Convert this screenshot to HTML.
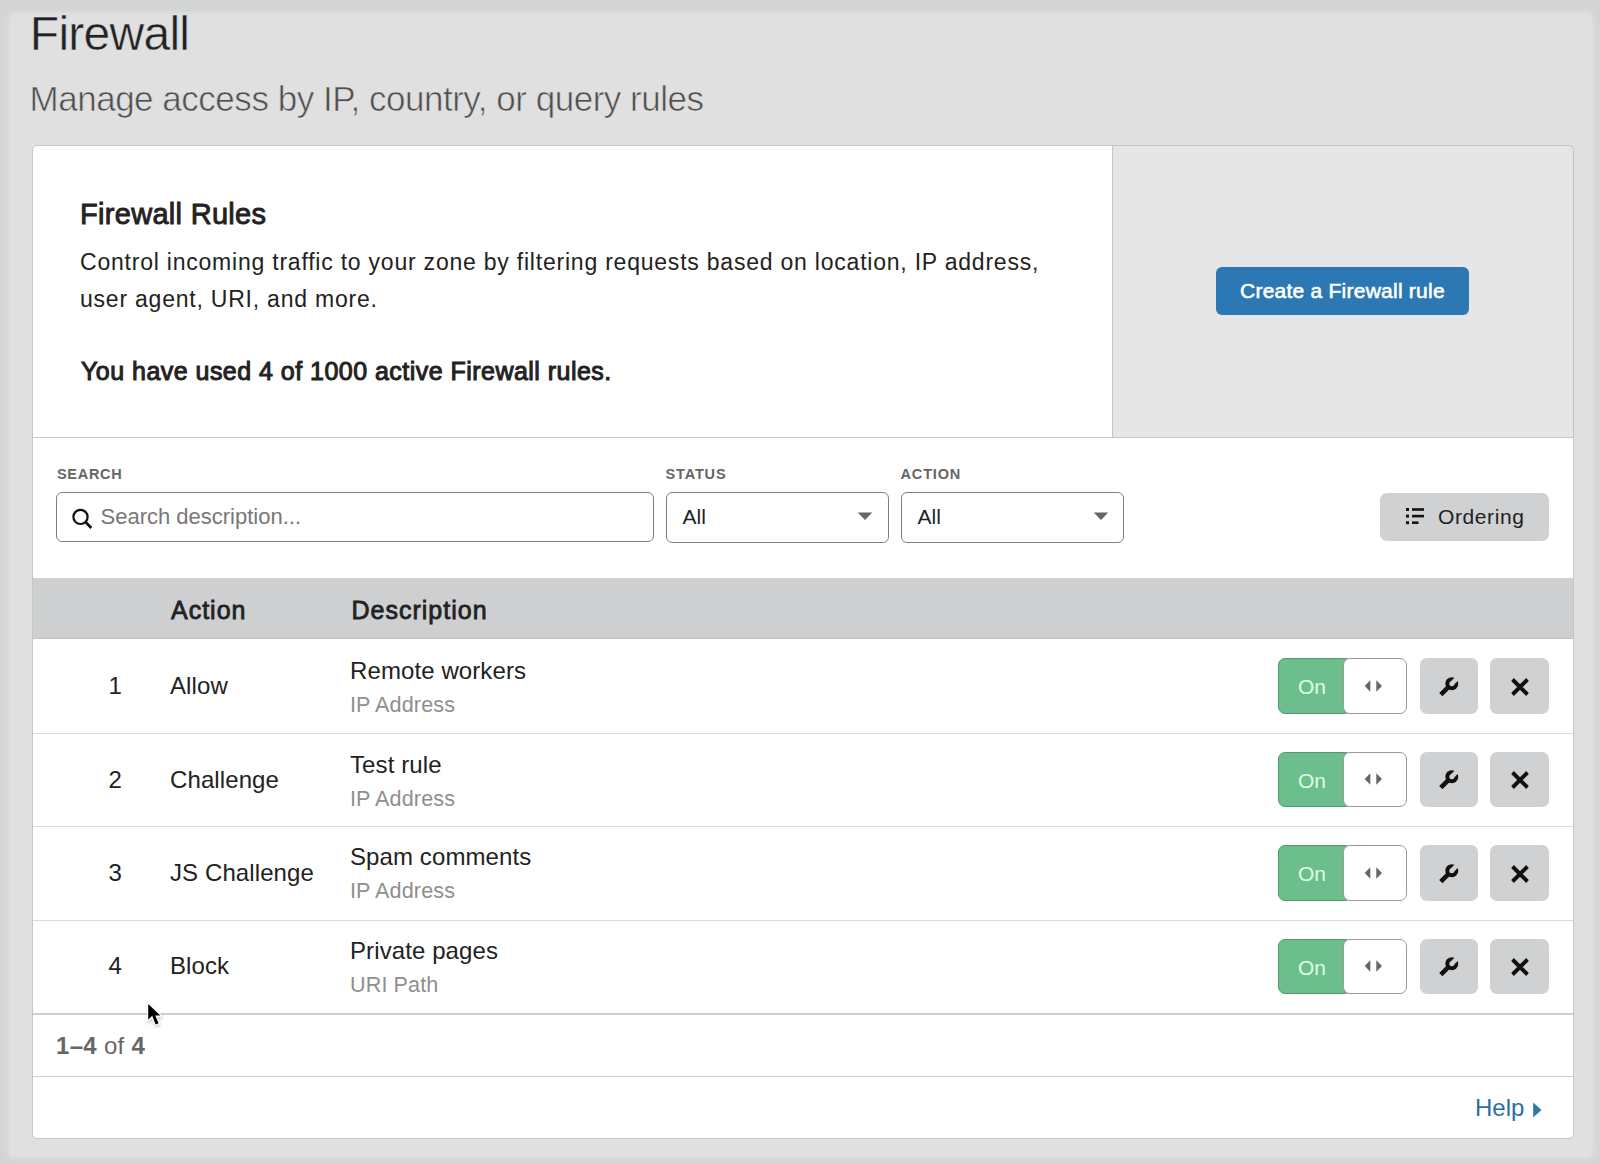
<!DOCTYPE html>
<html><head><meta charset="utf-8">
<style>
*{margin:0;padding:0;box-sizing:border-box}
html,body{width:1600px;height:1163px;overflow:hidden}
body{position:relative;background:#d2d4d5;font-family:"Liberation Sans",sans-serif;color:#222}
.a{position:absolute;white-space:nowrap}
.inner{position:absolute;left:10px;top:14px;width:1582px;height:1143px;background:#e0e0e0;border-radius:5px;box-shadow:0 0 6px 2px #e0e0e0}
.card{position:absolute;left:32px;top:145px;width:1542px;height:994px;background:#fff;border:1px solid #c6c6c6;border-radius:5px}
.panel{position:absolute;left:1112px;top:145px;width:462px;height:293px;background:#e6e6e6;border:1px solid #c6c6c6;border-bottom:none;border-top-right-radius:5px}
.btn-blue{position:absolute;left:1216px;top:267px;width:253px;height:47.5px;background:#2b78b4;border-radius:6px}
.input{position:absolute;border:1.6px solid #808080;border-radius:6px;background:#fff}
.gbtn{position:absolute;background:#cfd1d2;border-radius:7px}
.lbl{font-size:14.5px;line-height:14.5px;font-weight:bold;color:#666;letter-spacing:0.85px}
.p24{font-size:24px;line-height:24px;color:#222;letter-spacing:0.1px}
.s21{font-size:21.6px;line-height:21.6px;color:#8f8f8f;letter-spacing:0.1px}
.hline{position:absolute;left:33px;width:1540px;height:1px;background:#dadada}
.tg{position:absolute;left:1278px;width:74px;height:55.5px;background:#6cbf8d;border:1.5px solid #52976e;border-radius:7px}
.kn{position:absolute;left:1342.7px;width:64.3px;height:55.5px;background:#fff;border:1.5px solid #9a9a9a;border-radius:7px}
.on{left:1298px;font-size:21px;line-height:21px;color:#dcffe6}
</style></head><body>
<div class="inner"></div>

<div class="a" style="left:29.8px;top:10.3px;font-size:48px;line-height:48px;letter-spacing:-0.73px;color:#222;-webkit-text-stroke:0.5px #e0e0e0">Firewall</div>
<div class="a" style="left:29.5px;top:81.3px;font-size:35px;line-height:35px;letter-spacing:-0.48px;color:#4f4f4f;-webkit-text-stroke:0.6px #e0e0e0">Manage access by IP, country, or query rules</div>

<div class="card"></div>
<div class="panel"></div>
<div class="a" style="left:33px;top:437px;width:1540px;height:1px;background:#c6c6c6"></div>

<div class="a" style="left:80px;top:200.1px;font-size:29px;line-height:29px;letter-spacing:0.3px;color:#222;-webkit-text-stroke:0.9px #222">Firewall Rules</div>
<div class="a" style="left:80px;top:244.1px;font-size:23px;line-height:36.5px;letter-spacing:0.78px;color:#222">Control incoming traffic to your zone by filtering requests based on location, IP address,<br>user agent, URI, and more.</div>
<div class="a" style="left:81px;top:358.8px;font-size:25px;line-height:25px;letter-spacing:0.47px;color:#222;-webkit-text-stroke:1px #222">You have used 4 of 1000 active Firewall rules.</div>

<div class="btn-blue"></div>
<div class="a" style="left:1240px;top:280.1px;font-size:21px;line-height:21px;letter-spacing:0.24px;color:#fff;-webkit-text-stroke:0.6px #fff">Create a Firewall rule</div>

<div class="a lbl" style="left:57px;top:466.7px;letter-spacing:0.7px">SEARCH</div>
<div class="a lbl" style="left:665.5px;top:466.7px">STATUS</div>
<div class="a lbl" style="left:900.5px;top:466.7px">ACTION</div>

<div class="input" style="left:56px;top:491.5px;width:598px;height:50.5px"></div>
<svg class="a" style="left:70px;top:506px" width="24" height="24" viewBox="0 0 24 24"><circle cx="10.5" cy="10.9" r="7.1" fill="none" stroke="#111" stroke-width="2.2"/><line x1="15.6" y1="16" x2="21.3" y2="22" stroke="#111" stroke-width="2.6"/></svg>
<div class="a" style="left:100.5px;top:505.8px;font-size:22px;line-height:22px;color:#777">Search description...</div>

<div class="input" style="left:666px;top:491.5px;width:223px;height:51.5px"></div>
<div class="a" style="left:682.5px;top:506.2px;font-size:21px;line-height:21px;color:#222">All</div>
<svg class="a" style="left:857px;top:511.5px" width="16" height="9" viewBox="0 0 16 9"><path d="M0.7 0.5 L15.3 0.5 L8 8 Z" fill="#666"/></svg>

<div class="input" style="left:901px;top:491.5px;width:223px;height:51.5px"></div>
<div class="a" style="left:917.5px;top:506.2px;font-size:21px;line-height:21px;color:#222">All</div>
<svg class="a" style="left:1093.3px;top:511.5px" width="16" height="9" viewBox="0 0 16 9"><path d="M0.7 0.5 L15.3 0.5 L8 8 Z" fill="#666"/></svg>

<div class="gbtn" style="left:1380px;top:492.5px;width:169px;height:48px"></div>
<svg class="a" style="left:1405px;top:507px" width="22" height="18" viewBox="0 0 22 18"><rect x="1" y="1" width="3" height="3" fill="#111"/><rect x="7" y="1.2" width="12" height="2.6" fill="#111"/><rect x="1" y="7.6" width="3" height="3" fill="#111"/><rect x="7" y="7.8" width="12" height="2.6" fill="#111"/><rect x="1" y="14.2" width="3" height="3" fill="#111"/><rect x="7" y="14.4" width="6.5" height="2.6" fill="#111"/></svg>
<div class="a" style="left:1438px;top:505.9px;font-size:21px;line-height:21px;letter-spacing:0.6px;color:#222">Ordering</div>

<div class="a" style="left:33px;top:578px;width:1540px;height:61px;background:#cdcfd0;border-bottom:1px solid #c2c2c2"></div>
<div class="a" style="left:171px;top:597.8px;font-size:25px;line-height:25px;letter-spacing:1.0px;color:#222;-webkit-text-stroke:0.8px #222">Action</div>
<div class="a" style="left:351.5px;top:597.8px;font-size:25px;line-height:25px;letter-spacing:1.0px;color:#222;-webkit-text-stroke:0.8px #222">Description</div>

<div class="a p24" style="left:60px;width:62px;text-align:right;top:673.7px">1</div>
<div class="a p24" style="left:170px;top:673.7px">Allow</div>
<div class="a p24" style="left:350px;top:659.1px">Remote workers</div>
<div class="a s21" style="left:350px;top:694.0px">IP Address</div>
<div class="tg" style="top:658.3px"></div>
<div class="kn" style="top:658.3px"><svg style="position:absolute;left:20px;top:19.5px" width="20" height="14" viewBox="0 0 20 14"><path d="M0.7 7 L6.3 1.2 L6.3 12.8 Z M12.3 1.2 L18 7 L12.3 12.8 Z" fill="#666"/></svg></div>
<div class="a on" style="top:676.1px">On</div>
<div class="gbtn" style="left:1419.5px;top:658.3px;width:58.5px;height:55.5px"></div>
<svg class="a" style="left:1439px;top:676.5px" width="20" height="20" viewBox="0 0 20 20"><defs><mask id="wm1"><rect width="20" height="20" fill="#fff"/><path d="M12.8 6.7 L21 -1.5" stroke="#000" stroke-width="4.6"/><circle cx="12.8" cy="6.7" r="2.5" fill="#000"/></mask></defs><g mask="url(#wm1)" fill="#111"><circle cx="12.8" cy="6.7" r="6.5"/><path d="M12.8 6.7 L1.8 17.7" stroke="#111" stroke-width="4.6" stroke-linecap="butt"/></g></svg>
<div class="gbtn" style="left:1490px;top:658.3px;width:58.5px;height:55.5px"></div>
<svg class="a" style="left:1509.5px;top:676.7px" width="20" height="20" viewBox="0 0 20 20"><path d="M2.5 2.5 L17.5 17.5 M17.5 2.5 L2.5 17.5" stroke="#111" stroke-width="3.9"/></svg>
<div class="a p24" style="left:60px;width:62px;text-align:right;top:767.7px">2</div>
<div class="a p24" style="left:170px;top:767.7px">Challenge</div>
<div class="a p24" style="left:350px;top:752.6px">Test rule</div>
<div class="a s21" style="left:350px;top:787.5px">IP Address</div>
<div class="tg" style="top:751.8px"></div>
<div class="kn" style="top:751.8px"><svg style="position:absolute;left:20px;top:19.5px" width="20" height="14" viewBox="0 0 20 14"><path d="M0.7 7 L6.3 1.2 L6.3 12.8 Z M12.3 1.2 L18 7 L12.3 12.8 Z" fill="#666"/></svg></div>
<div class="a on" style="top:769.6px">On</div>
<div class="gbtn" style="left:1419.5px;top:751.8px;width:58.5px;height:55.5px"></div>
<svg class="a" style="left:1439px;top:770.0px" width="20" height="20" viewBox="0 0 20 20"><defs><mask id="wm2"><rect width="20" height="20" fill="#fff"/><path d="M12.8 6.7 L21 -1.5" stroke="#000" stroke-width="4.6"/><circle cx="12.8" cy="6.7" r="2.5" fill="#000"/></mask></defs><g mask="url(#wm2)" fill="#111"><circle cx="12.8" cy="6.7" r="6.5"/><path d="M12.8 6.7 L1.8 17.7" stroke="#111" stroke-width="4.6" stroke-linecap="butt"/></g></svg>
<div class="gbtn" style="left:1490px;top:751.8px;width:58.5px;height:55.5px"></div>
<svg class="a" style="left:1509.5px;top:770.2px" width="20" height="20" viewBox="0 0 20 20"><path d="M2.5 2.5 L17.5 17.5 M17.5 2.5 L2.5 17.5" stroke="#111" stroke-width="3.9"/></svg>
<div class="a p24" style="left:60px;width:62px;text-align:right;top:860.9px">3</div>
<div class="a p24" style="left:170px;top:860.9px">JS Challenge</div>
<div class="a p24" style="left:350px;top:845.1px">Spam comments</div>
<div class="a s21" style="left:350px;top:880.3px">IP Address</div>
<div class="tg" style="top:845.3px"></div>
<div class="kn" style="top:845.3px"><svg style="position:absolute;left:20px;top:19.5px" width="20" height="14" viewBox="0 0 20 14"><path d="M0.7 7 L6.3 1.2 L6.3 12.8 Z M12.3 1.2 L18 7 L12.3 12.8 Z" fill="#666"/></svg></div>
<div class="a on" style="top:863.1px">On</div>
<div class="gbtn" style="left:1419.5px;top:845.3px;width:58.5px;height:55.5px"></div>
<svg class="a" style="left:1439px;top:863.5px" width="20" height="20" viewBox="0 0 20 20"><defs><mask id="wm3"><rect width="20" height="20" fill="#fff"/><path d="M12.8 6.7 L21 -1.5" stroke="#000" stroke-width="4.6"/><circle cx="12.8" cy="6.7" r="2.5" fill="#000"/></mask></defs><g mask="url(#wm3)" fill="#111"><circle cx="12.8" cy="6.7" r="6.5"/><path d="M12.8 6.7 L1.8 17.7" stroke="#111" stroke-width="4.6" stroke-linecap="butt"/></g></svg>
<div class="gbtn" style="left:1490px;top:845.3px;width:58.5px;height:55.5px"></div>
<svg class="a" style="left:1509.5px;top:863.7px" width="20" height="20" viewBox="0 0 20 20"><path d="M2.5 2.5 L17.5 17.5 M17.5 2.5 L2.5 17.5" stroke="#111" stroke-width="3.9"/></svg>
<div class="a p24" style="left:60px;width:62px;text-align:right;top:954.3px">4</div>
<div class="a p24" style="left:170px;top:954.3px">Block</div>
<div class="a p24" style="left:350px;top:939.1px">Private pages</div>
<div class="a s21" style="left:350px;top:974.0px">URI Path</div>
<div class="tg" style="top:938.8px"></div>
<div class="kn" style="top:938.8px"><svg style="position:absolute;left:20px;top:19.5px" width="20" height="14" viewBox="0 0 20 14"><path d="M0.7 7 L6.3 1.2 L6.3 12.8 Z M12.3 1.2 L18 7 L12.3 12.8 Z" fill="#666"/></svg></div>
<div class="a on" style="top:956.6px">On</div>
<div class="gbtn" style="left:1419.5px;top:938.8px;width:58.5px;height:55.5px"></div>
<svg class="a" style="left:1439px;top:957.0px" width="20" height="20" viewBox="0 0 20 20"><defs><mask id="wm4"><rect width="20" height="20" fill="#fff"/><path d="M12.8 6.7 L21 -1.5" stroke="#000" stroke-width="4.6"/><circle cx="12.8" cy="6.7" r="2.5" fill="#000"/></mask></defs><g mask="url(#wm4)" fill="#111"><circle cx="12.8" cy="6.7" r="6.5"/><path d="M12.8 6.7 L1.8 17.7" stroke="#111" stroke-width="4.6" stroke-linecap="butt"/></g></svg>
<div class="gbtn" style="left:1490px;top:938.8px;width:58.5px;height:55.5px"></div>
<svg class="a" style="left:1509.5px;top:957.2px" width="20" height="20" viewBox="0 0 20 20"><path d="M2.5 2.5 L17.5 17.5 M17.5 2.5 L2.5 17.5" stroke="#111" stroke-width="3.9"/></svg>

<div class="hline" style="top:733px"></div>
<div class="hline" style="top:826px"></div>
<div class="hline" style="top:920px"></div>
<div class="hline" style="top:1013px;height:2px;background:#cfcfcf"></div>
<div class="hline" style="top:1076px;background:#cfcfcf"></div>

<div class="a" style="left:56px;top:1034px;font-size:24px;line-height:24px;letter-spacing:0.3px;color:#666"><b>1–4</b> of <b>4</b></div>

<div class="a" style="left:1475px;top:1095.6px;font-size:24px;line-height:24px;color:#2a6fa6">Help</div>
<svg class="a" style="left:1532px;top:1102px" width="10" height="16" viewBox="0 0 10 16"><path d="M1.2 0.5 L9.5 8 L1.2 15.5 Z" fill="#2a78b4"/></svg>

<svg class="a" style="left:143px;top:998px" width="28" height="36" viewBox="0 0 28 36">
<defs><filter id="sh" x="-50%" y="-50%" width="200%" height="200%"><feGaussianBlur stdDeviation="1.4"/></filter></defs>
<path d="M5.2 6 L5.2 21.8 L9.2 17.8 L12.6 26.4 L15.6 25.2 L12.3 17.6 L17.3 17.6 Z" fill="#000" stroke="#000" stroke-width="2.6" opacity="0.22" filter="url(#sh)" transform="translate(0.5,1.5)"/>
<path d="M5.2 6 L5.2 21.8 L9.2 17.8 L12.6 26.4 L15.6 25.2 L12.3 17.6 L17.3 17.6 Z" fill="#fff" stroke="#fff" stroke-width="2.8" stroke-linejoin="round"/>
<path d="M5.2 6 L5.2 21.8 L9.2 17.8 L12.6 26.4 L15.6 25.2 L12.3 17.6 L17.3 17.6 Z" fill="#000"/>
</svg>
</body></html>
